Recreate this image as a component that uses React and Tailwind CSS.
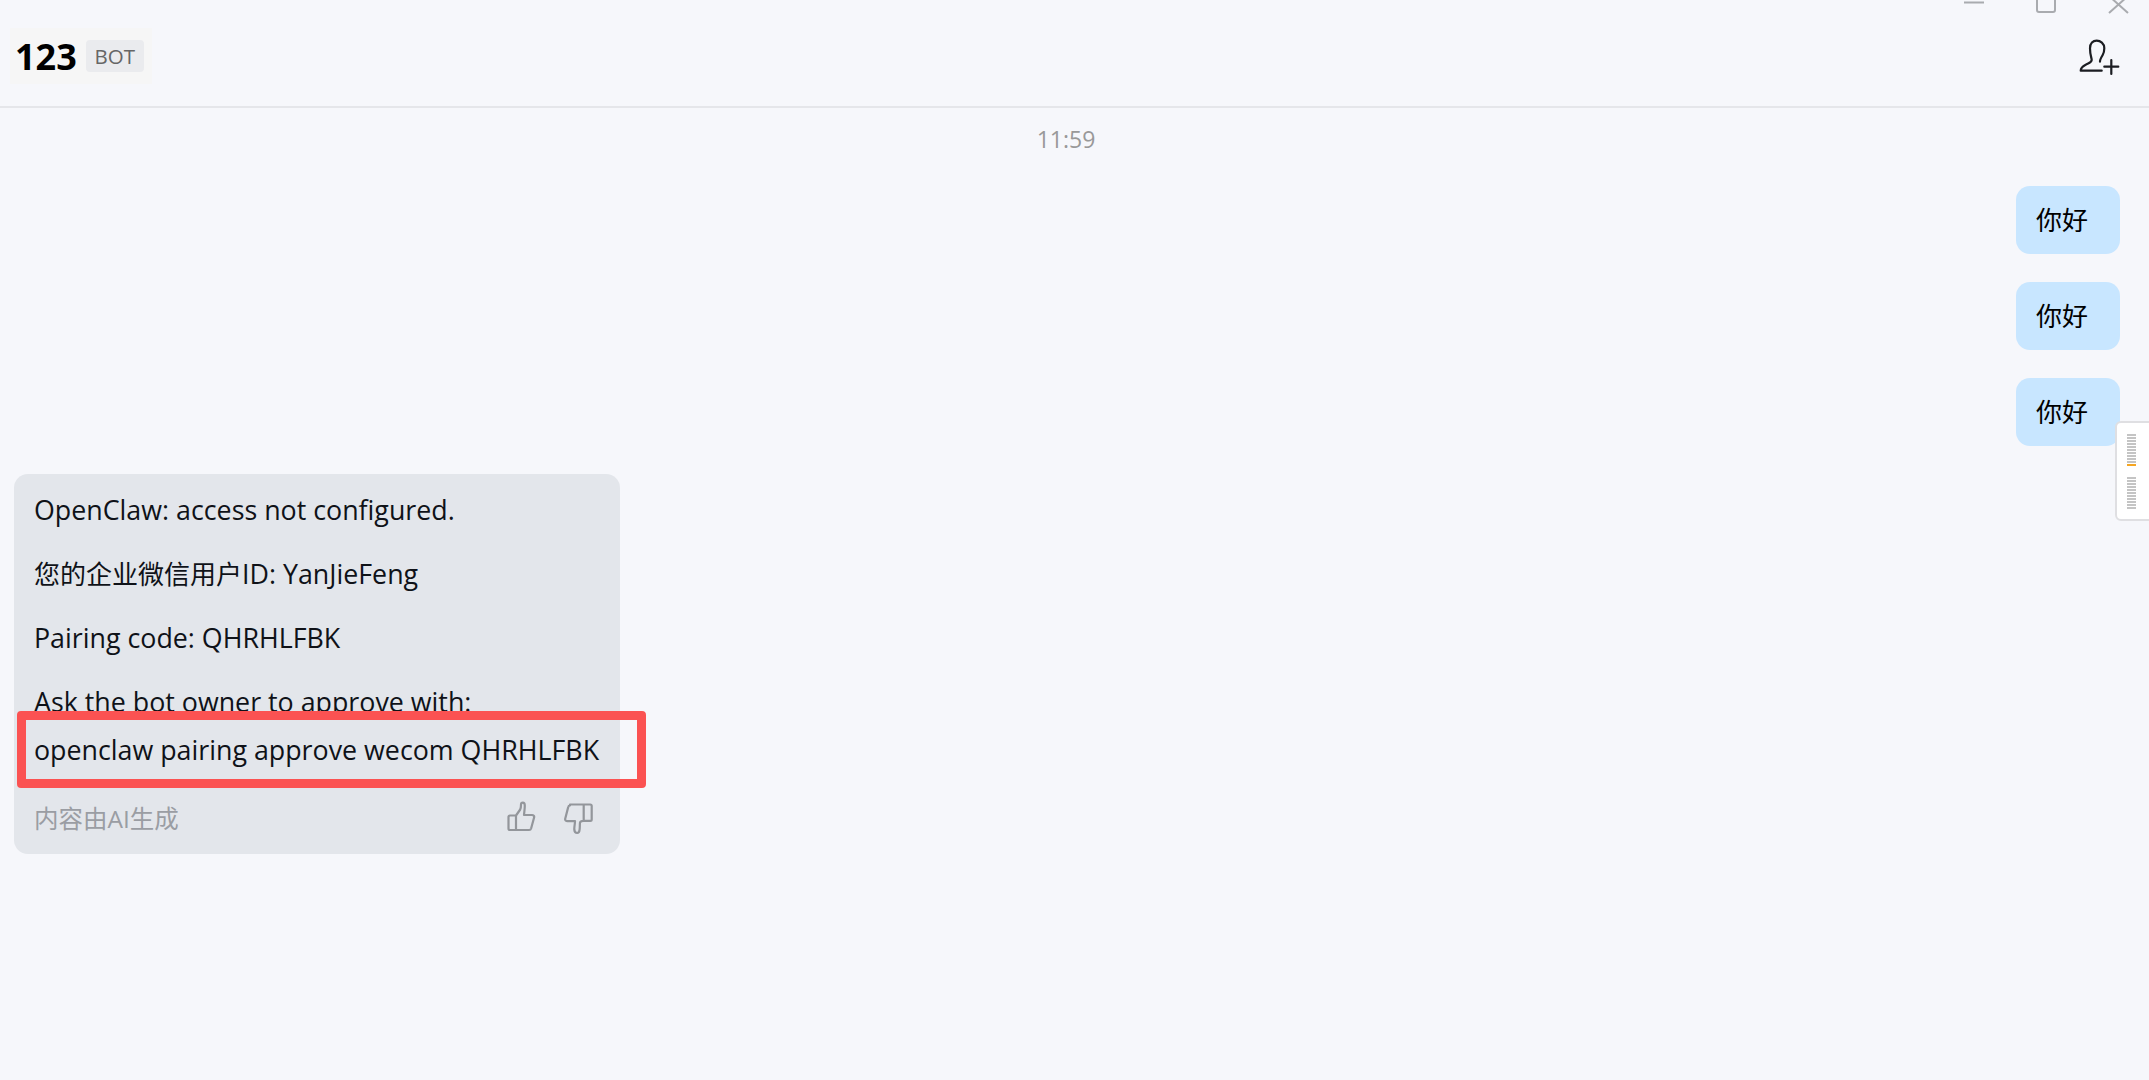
const font = { fontFamily: '"Open Sans", "Noto Sans CJK SC", sans-serif' };

function UserAdd() {
  return (
    <svg width="44" height="40" viewBox="0 0 44 40" fill="none" stroke="#1b1d22" strokeWidth="2.2" strokeLinecap="round">
      <path d="M2.700 32.700h21M2.700 32.700c0-3 2-4.500 5-6 3.500-1.700 6-2.200 6-4.700 0-2-1.700-5-1.700-11.700 0-5 3-7.600 6.700-7.600s7.600 2.600 7.600 7.600c0 3-.6 5-1.600 6.700-1.500 2.500-3 4.700-2.700 6.700" />
      <path d="M26.300 28.700h14M33.300 22v14" />
    </svg>
  );
}

function ThumbUp() {
  return (
    <svg width="30" height="32" viewBox="0 0 30 32" fill="none" stroke="#93969b" strokeWidth="2.2" strokeLinejoin="round">
      <path d="M3 14.500h6l4.200-6c.6-1 .8-2 .8-5 0-1.200.8-1.800 1.800-1.800 1.200 0 2 1 2 3 0 3-.5 6-.8 9.300h8c1.500 0 2.500 1 2.100 2.500l-3 11c-.3 1-.9 1.500-2 1.500H3c-1 0-1.500-.5-1.500-1.500V16c0-1 .5-1.500 1.500-1.500zM9 14.500V30" />
    </svg>
  );
}

function ThumbDown() {
  return (
    <svg width="30" height="32" viewBox="0 0 30 32" fill="none" stroke="#93969b" strokeWidth="2.2" strokeLinejoin="round">
      <path d="M6 1.500h20.300c.9 0 1.400.5 1.400 1.400v13.600c0 .9-.5 1.400-1.400 1.400h-6.800c-2 0-3.200.3-3.500 1.800-.3 2 0 4-.4 7-.2 2-1 3.300-2.500 3.300s-2.600-1.300-2.800-3.300c-.2-3 .7-5.500.7-8.500H3.500c-1.500 0-2.700-1-2.300-2.500l3-11.600c.2-.9.8-1.600 1.800-1.600zM19.700 1.500V18" />
    </svg>
  );
}

function MapLines({ count, accent }) {
  return (
    <div className="flex flex-col gap-[1px]">
      {Array.from({ length: count }).map((_, i) => (
        <div key={i} className={`w-[9px] h-[2px] ${accent && i === count - 1 ? 'bg-[#f5a623]' : 'bg-[#c4c4c4]'}`} />
      ))}
    </div>
  );
}

function MyBubble() {
  return (
    <div className="w-[104px] h-[68px] rounded-[14px] bg-[#c8e6ff] flex items-center pl-[20px] text-[26px] text-black">
      你好
    </div>
  );
}

export default function App() {
  return (
    <div className="relative h-[1080px] overflow-hidden bg-[#f6f7fb]" style={font}>
      {/* window buttons, cut off by the top edge */}
      <div className="absolute top-0 left-[1964px]">
        <svg width="170" height="14" viewBox="0 0 170 14" fill="none" stroke="#a9abaf" strokeWidth="2">
          <path d="M0 2.500h20" />
          <rect x="73" y="-8" width="18" height="20" rx="2" />
          <path d="M145 -4l19 17M164 -4l-19 17" />
        </svg>
      </div>

      <header className="h-[108px] border-b-2 border-[#e5e6ea] flex items-center justify-between pl-[10px] pr-[27px]">
        <div className="flex items-center h-[56px] w-[142px] pl-[5px] gap-[9px] bg-[#f6f6f6] mt-[6px]">
          <span className="text-[36px] font-bold text-black leading-none pt-[2px]">123</span>
          <span className="w-[58px] h-[32px] rounded bg-[#eaebee] text-[#666] text-[20.500px] flex items-center justify-center">BOT</span>
        </div>
        <div className="mt-[10px]"><UserAdd /></div>
      </header>

      <div className="text-center text-[23px] leading-[30px] text-[#999] mt-[16px] pr-[17px]">11:59</div>

      <div className="flex flex-col items-end gap-[28px] pr-[29px] mt-[32px]">
        <MyBubble />
        <MyBubble />
        <MyBubble />
      </div>

      {/* minimap on the right edge */}
      <div className="absolute left-[2115px] top-[421px] w-[40px] h-[100px] bg-white border-2 border-[#dfdfe2] rounded-[6px] flex flex-col gap-[11px] pl-[10px] pt-[11px]">
        <MapLines count={11} accent />
        <MapLines count={11} />
      </div>

      <div className="relative ml-[14px] mt-[28px] w-[606px] h-[380px] rounded-[14px] bg-[#e3e6eb] px-[20px] text-[26.800px] text-[#0f1218]">
        <div className="flex flex-col gap-[28px] pt-[18px] leading-[36px]">
          <p>OpenClaw: access not configured.</p>
          <p><span className="text-[26px]">您的企业微信用户</span>ID: YanJieFeng</p>
          <p>Pairing code: QHRHLFBK</p>
          <div>
            <p>Ask the bot owner to approve with:</p>
            <p className="mt-[12px]">openclaw pairing approve wecom QHRHLFBK</p>
          </div>
        </div>
        <div className="flex items-start justify-between mt-[33px] pr-[6px]">
          <span className="text-[24.500px] leading-[36px] text-[#9a9da3]">内容由AI生成</span>
          <div className="flex items-start gap-[27px]">
            <ThumbUp />
            <div className="mt-[2px]"><ThumbDown /></div>
          </div>
        </div>
        {/* red annotation over the command line */}
        <div className="absolute left-[3px] top-[237px] w-[629px] h-[77px] border-[9px] border-[#fb5252] rounded-[4px]" />
      </div>
    </div>
  );
}
